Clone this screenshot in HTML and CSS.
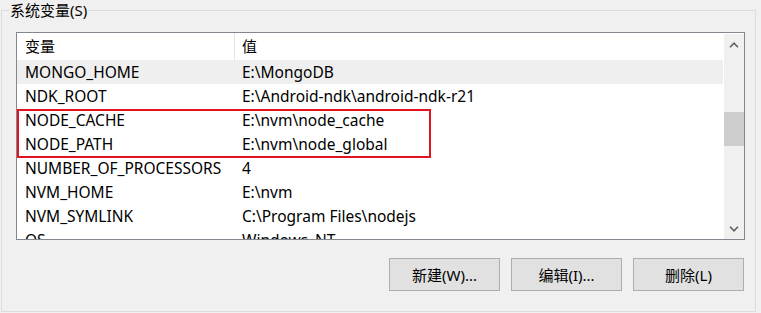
FILE: index.html
```html
<!DOCTYPE html>
<html lang="zh-CN">
<head>
  <meta charset="UTF-8">
  <meta name="viewport" content="width=device-width, initial-scale=1.0">
  <title>系统变量</title>
  <link rel="stylesheet" href="styles.css">
</head>
<body>
  <fieldset class="group">
    <legend>系统变量(S)</legend>

    <div class="listbox">
      <div class="list">
        <div class="row head">
          <span class="name">变量</span>
          <span class="value">值</span>
        </div>
        <div class="row hover">
          <span class="name">MONGO_HOME</span>
          <span class="value">E:\MongoDB</span>
        </div>
        <div class="row">
          <span class="name">NDK_ROOT</span>
          <span class="value">E:\Android-ndk\android-ndk-r21</span>
        </div>
        <div class="row">
          <span class="name">NODE_CACHE</span>
          <span class="value">E:\nvm\node_cache</span>
        </div>
        <div class="row">
          <span class="name">NODE_PATH</span>
          <span class="value">E:\nvm\node_global</span>
        </div>
        <div class="row">
          <span class="name">NUMBER_OF_PROCESSORS</span>
          <span class="value">4</span>
        </div>
        <div class="row">
          <span class="name">NVM_HOME</span>
          <span class="value">E:\nvm</span>
        </div>
        <div class="row">
          <span class="name">NVM_SYMLINK</span>
          <span class="value">C:\Program Files\nodejs</span>
        </div>
        <div class="row">
          <span class="name">OS</span>
          <span class="value">Windows_NT</span>
        </div>
      </div>

      <div class="scrollbar">
        <div class="arrow">
          <svg width="10" height="6" viewBox="0 0 10 6"><path d="M1 5.2 L5 1.2 L9 5.2" fill="none" stroke="#606060" stroke-width="1.6"/></svg>
        </div>
        <div class="track">
          <div class="thumb"></div>
        </div>
        <div class="arrow">
          <svg width="10" height="6" viewBox="0 0 10 6"><path d="M1 0.8 L5 4.8 L9 0.8" fill="none" stroke="#606060" stroke-width="1.6"/></svg>
        </div>
      </div>

      <!-- 红框标注 NODE_CACHE / NODE_PATH -->
      <div class="mark"></div>
    </div>

    <div class="buttons">
      <button type="button">新建(W)...</button>
      <button type="button">编辑(I)...</button>
      <button type="button">删除(L)</button>
    </div>
  </fieldset>
</body>
</html>
```

FILE: styles.css
```css
body {
  margin: 0;
  background-color: #f0f0f0;
  font-family: "Noto Sans", "Noto Sans CJK SC", sans-serif;
  font-size: 15px;
  color: #000000;
}

.group {
  margin: 0 5px 0 1px;
  padding: 12px 10px 20px 14px;
  border: 1px solid #dcdcdc;
  min-width: 0;
}

.group legend {
  margin-left: -7px;
  padding: 0 1px;
  line-height: 20px;
  height: 20px;
}

.listbox {
  position: relative;
  display: flex;
  height: 208px;
  box-sizing: border-box;
  border: 1px solid #828790;
  background-color: #ffffff;
  overflow: hidden;
}

.list {
  flex: 1;
  overflow: hidden;
  margin-right: 1px;
}

.row {
  display: flex;
  height: 24px;
  line-height: 24px;
  font-size: 15.5px;
  white-space: nowrap;
}

.row .name {
  width: 210px;
  padding-left: 8px;
  flex-shrink: 0;
}

.row .value {
  padding-left: 7px;
}

.row.head {
  height: 27px;
  line-height: 27px;
  font-size: 15px;
}

.row.head .name {
  border-right: 1px solid #e5e5e5;
  width: 209px;
}

.row.hover {
  background-color: #efefef;
}

.scrollbar {
  width: 20px;
  display: flex;
  flex-direction: column;
  background-color: #f0f0f0;
  margin: 1px 0 0;
}

.arrow {
  height: 21px;
  display: flex;
  align-items: center;
  justify-content: center;
}

.track {
  flex: 1;
  padding-top: 57px;
}

.thumb {
  height: 34px;
  background-color: #cdcdcd;
}

.mark {
  position: absolute;
  left: 0;
  top: 76px;
  width: 414px;
  height: 49px;
  box-sizing: border-box;
  border: 2px solid #e3141f;
}

.buttons {
  display: flex;
  justify-content: flex-end;
  gap: 11px;
  margin-top: 18px;
  padding-right: 1px;
}

button {
  width: 111px;
  height: 33px;
  background-color: #e1e1e1;
  border: 1px solid #adadad;
  border-radius: 0;
  font-family: "Noto Sans", "Noto Sans CJK SC", sans-serif;
  font-size: 15px;
  color: #000000;
  padding: 0;
}
```
